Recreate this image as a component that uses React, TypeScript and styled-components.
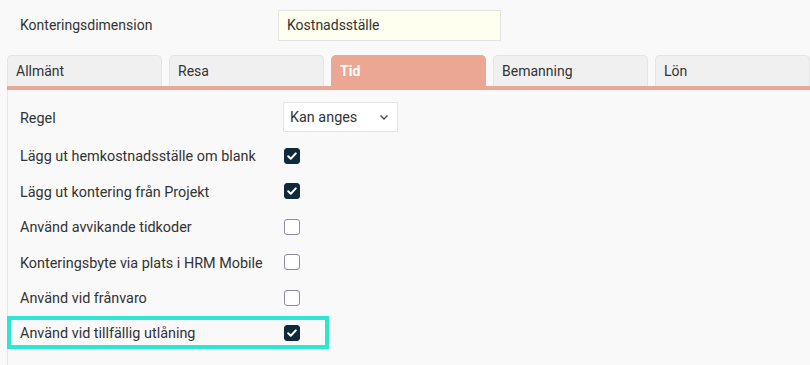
import React from "react";
import styled, { createGlobalStyle } from "styled-components";

const GlobalStyle = createGlobalStyle`
  html, body {
    margin: 0;
    padding: 0;
    background: #f9f9f9;
    font-family: Roboto, "Liberation Sans", sans-serif;
    color: #333333;
  }
  * { box-sizing: border-box; }
`;

const Page = styled.div`
  width: 810px;
  height: 365px;
  overflow: hidden;
  background: #f9f9f9;
`;

const TopRow = styled.div`
  display: flex;
  align-items: center;
  height: 30px;
  margin-top: 10px;
  padding-left: 20px;
`;

const TopLabel = styled.div`
  width: 258px;
  font-size: 14px;
`;

const TextInput = styled.div`
  width: 223px;
  height: 31px;
  display: flex;
  align-items: center;
  padding-left: 8px;
  background: #fffff0;
  border: 1px solid #e2e2e2;
  font-size: 14px;
`;

const TabBar = styled.div`
  display: flex;
  gap: 7px;
  margin: 15px 0 0 7px;
  height: 35px;
  border-bottom: 4px solid #eba794;
`;

const Tab = styled.div<{ $active?: boolean }>`
  flex: 0 0 155px;
  height: 31px;
  display: flex;
  align-items: center;
  padding-left: 8px;
  font-size: 14px;
  border-radius: 5px 5px 0 0;
  border: 1px solid ${(p) => (p.$active ? "#eba794" : "#e4e4e4")};
  border-bottom: none;
  background: ${(p) => (p.$active ? "#eba794" : "#f0f0f0")};
  color: ${(p) => (p.$active ? "#ffffff" : "#333333")};
  font-weight: ${(p) => (p.$active ? 700 : 400)};
`;

const Content = styled.div`
  margin-left: 7px;
  border-left: 1px solid #e6e6e6;
  padding: 12px 0 20px 12px;
  height: 275px;
  font-size: 14.4px;
`;

const Label = styled.span`
  padding-top: 2px;
`;

const SelectRow = styled.div`
  display: grid;
  grid-template-columns: 263px auto;
  align-items: center;
  height: 30px;
  margin-bottom: 6.3px;
`;

const Select = styled.div`
  width: 115px;
  height: 30px;
  display: flex;
  align-items: center;
  justify-content: space-between;
  padding: 0 8px 0 6px;
  background: #ffffff;
  border: 1px solid #e4e4e4;
`;

const Row = styled.div<{ $highlight?: boolean }>`
  display: grid;
  grid-template-columns: 264px auto;
  align-items: center;
  height: ${(p) => (p.$highlight ? "33px" : "35.4px")};
  margin: ${(p) => (p.$highlight ? "1.2px 0 1.2px -13px" : "0")};
  width: ${(p) => (p.$highlight ? "322px" : "auto")};
  padding-left: ${(p) => (p.$highlight ? "9px" : "0")};
  border: ${(p) => (p.$highlight ? "4px solid #2ee6d3" : "none")};
`;

const Box = styled.span<{ $checked?: boolean }>`
  width: 16px;
  height: 16px;
  border-radius: 3px;
  display: flex;
  align-items: center;
  justify-content: center;
  background: ${(p) => (p.$checked ? "#0e2a3b" : "#ffffff")};
  border: 1px solid ${(p) => (p.$checked ? "#0e2a3b" : "#8d8ba3")};
`;

const Check: React.FC<{ checked?: boolean }> = ({ checked }) => (
  <Box $checked={checked}>
    {checked && (
      <svg width="12" height="12" viewBox="0 0 12 12">
        <path
          d="M2.2 6.3 L4.8 8.8 L9.8 3.4"
          fill="none"
          stroke="#ffffff"
          strokeWidth="2"
          strokeLinecap="round"
          strokeLinejoin="round"
        />
      </svg>
    )}
  </Box>
);

const Chevron = () => (
  <svg width="10" height="10" viewBox="0 0 10 10">
    <path
      d="M1.5 3.5 L5 7 L8.5 3.5"
      fill="none"
      stroke="#444"
      strokeWidth="1.3"
    />
  </svg>
);

const rows = [
  { label: "Lägg ut hemkostnadsställe om blank", checked: true },
  { label: "Lägg ut kontering från Projekt", checked: true },
  { label: "Använd avvikande tidkoder", checked: false },
  { label: "Konteringsbyte via plats i HRM Mobile", checked: false },
  { label: "Använd vid frånvaro", checked: false },
  { label: "Använd vid tillfällig utlåning", checked: true, highlight: true },
];

const tabs = ["Allmänt", "Resa", "Tid", "Bemanning", "Lön"];

export default function App() {
  return (
    <Page>
      <GlobalStyle />
      <TopRow>
        <TopLabel>Konteringsdimension</TopLabel>
        <TextInput>Kostnadsställe</TextInput>
      </TopRow>
      <TabBar>
        {tabs.map((t) => (
          <Tab key={t} $active={t === "Tid"}>
            {t}
          </Tab>
        ))}
      </TabBar>
      <Content>
        <SelectRow>
          <Label>Regel</Label>
          <Select>
            <span>Kan anges</span>
            <Chevron />
          </Select>
        </SelectRow>
        {rows.map((r) => (
          <Row key={r.label} $highlight={r.highlight}>
            <Label>{r.label}</Label>
            <Check checked={r.checked} />
          </Row>
        ))}
      </Content>
    </Page>
  );
}
